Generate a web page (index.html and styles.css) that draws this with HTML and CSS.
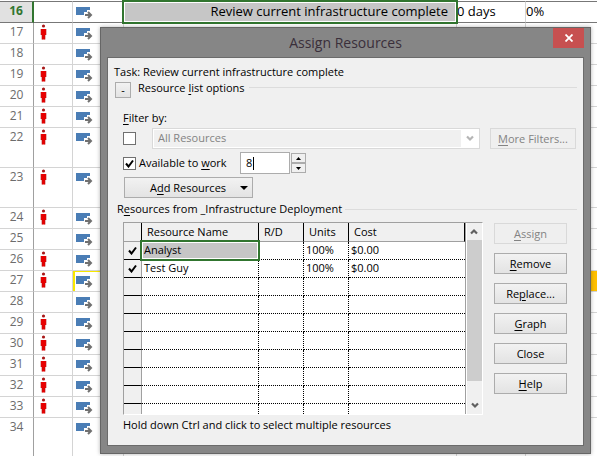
FILE: index.html
```html
<!DOCTYPE html>
<html lang="en">
<head>
<meta charset="utf-8">
<title>Assign Resources</title>
<link rel="stylesheet" href="styles.css">
</head>
<body>
<svg class="sprite" aria-hidden="true">
  <symbol id="person" viewBox="0 0 7 16">
    <circle cx="3.5" cy="2" r="1.6" fill="#a81818"/>
    <path d="M1 5h5v6H1z" fill="#f80000"/>
    <path d="M2 5h3v10.500H2z" fill="#e80000"/>
    <path d="M1 5v6M6 5v6M2 11v4.500M5 11v4.500" stroke="#b01010" stroke-width=".6"/>
  </symbol>
  <symbol id="task" viewBox="0 0 18 12">
    <path d="M0 0h14v8H0z" fill="#4a7db5"/>
    <path d="M8 5h3V3h4l3 4v5H8z" fill="#fff"/>
    <path d="M9 8h6M12 5l3 3-3 3" fill="none" stroke="#707070" stroke-width="2"/>
  </symbol>
  <symbol id="check" viewBox="0 0 9 9">
    <path d="M1 4.500l2.500 3L8 1.500" fill="none" stroke="#000" stroke-width="2"/>
  </symbol>
  <symbol id="chevron" viewBox="0 0 8 7">
    <path d="M1 1.500l3 3 3-3" fill="none" stroke="currentColor" stroke-width="2.200"/>
  </symbol>
</svg>

<table class="sheet">
  <colgroup><col class="c-num"><col class="c-ind"><col class="c-mode"><col class="c-name"><col class="c-dur"><col></colgroup>
  <tbody>
    <tr class="current"><th>16</th><td></td><td><svg class="task"><use href="#task"/></svg></td><td class="picked">Review current infrastructure complete</td><td>0 days</td><td>0%</td></tr>
    <tr><th>17</th><td><svg class="person"><use href="#person"/></svg></td><td><svg class="task"><use href="#task"/></svg></td><td></td><td></td><td></td></tr>
    <tr><th>18</th><td></td><td><svg class="task"><use href="#task"/></svg></td><td></td><td></td><td></td></tr>
    <tr><th>19</th><td><svg class="person"><use href="#person"/></svg></td><td><svg class="task"><use href="#task"/></svg></td><td></td><td></td><td></td></tr>
    <tr><th>20</th><td><svg class="person"><use href="#person"/></svg></td><td><svg class="task"><use href="#task"/></svg></td><td></td><td></td><td></td></tr>
    <tr><th>21</th><td><svg class="person"><use href="#person"/></svg></td><td><svg class="task"><use href="#task"/></svg></td><td></td><td></td><td></td></tr>
    <tr class="tall"><th>22</th><td><svg class="person"><use href="#person"/></svg></td><td><svg class="task"><use href="#task"/></svg></td><td></td><td></td><td></td></tr>
    <tr class="tall"><th>23</th><td><svg class="person"><use href="#person"/></svg></td><td><svg class="task"><use href="#task"/></svg></td><td></td><td></td><td></td></tr>
    <tr><th>24</th><td><svg class="person"><use href="#person"/></svg></td><td><svg class="task"><use href="#task"/></svg></td><td></td><td></td><td></td></tr>
    <tr><th>25</th><td></td><td><svg class="task"><use href="#task"/></svg></td><td></td><td></td><td></td></tr>
    <tr><th>26</th><td><svg class="person"><use href="#person"/></svg></td><td><svg class="task"><use href="#task"/></svg></td><td></td><td></td><td></td></tr>
    <tr><th>27</th><td><svg class="person"><use href="#person"/></svg></td><td class="ringed"><svg class="task"><use href="#task"/></svg></td><td></td><td></td><td class="amber"></td></tr>
    <tr><th>28</th><td></td><td><svg class="task"><use href="#task"/></svg></td><td></td><td></td><td></td></tr>
    <tr><th>29</th><td><svg class="person"><use href="#person"/></svg></td><td><svg class="task"><use href="#task"/></svg></td><td></td><td></td><td></td></tr>
    <tr><th>30</th><td><svg class="person"><use href="#person"/></svg></td><td><svg class="task"><use href="#task"/></svg></td><td></td><td></td><td></td></tr>
    <tr><th>31</th><td><svg class="person"><use href="#person"/></svg></td><td><svg class="task"><use href="#task"/></svg></td><td></td><td></td><td></td></tr>
    <tr><th>32</th><td><svg class="person"><use href="#person"/></svg></td><td><svg class="task"><use href="#task"/></svg></td><td></td><td></td><td></td></tr>
    <tr><th>33</th><td><svg class="person"><use href="#person"/></svg></td><td><svg class="task"><use href="#task"/></svg></td><td></td><td></td><td></td></tr>
    <tr class="tall"><th>34</th><td></td><td><svg class="task"><use href="#task"/></svg></td><td></td><td></td><td></td></tr>
  </tbody>
</table>

<section class="dialog" role="dialog" aria-labelledby="dialog-title">
  <header class="titlebar">
    <h1 id="dialog-title">Assign Resources</h1>
    <button class="close" type="button" aria-label="Close window"><svg viewBox="0 0 8 8"><path d="M.5.5l7 7M7.500.5l-7 7" stroke="#fff" stroke-width="1.800"/></svg></button>
  </header>
  <form class="panel">
    <p class="taskline">Task: Review current infrastructure complete</p>
    <div class="group options">
      <button class="btn toggle" type="button">-</button>
      <span class="legend">Resource <u>l</u>ist options</span>
      <span class="rule"></span>
    </div>
    <div class="filters">
      <label class="filter-label" for="filter-on"><u>F</u>ilter by:</label>
      <div class="row">
        <span class="tick"><input type="checkbox" id="filter-on"></span>
        <span class="combo"><select disabled aria-label="Filter"><option>All Resources</option></select><span class="drop"><svg><use href="#chevron"/></svg></span></span>
        <button class="btn more" type="button" disabled><u>M</u>ore Filters...</button>
      </div>
      <div class="row available">
        <span class="tick"><input type="checkbox" id="avail" checked><svg><use href="#check"/></svg></span>
        <label class="avail-label" for="avail">Available to <u>w</u>ork</label>
        <span class="amount"><input type="text" value="8" aria-label="Hours"><span class="caret"></span></span>
        <span class="spin">
          <button type="button" aria-label="More"><svg viewBox="0 0 5 3"><path d="M0 3L2.500 0 5 3z"/></svg></button>
          <button type="button" aria-label="Less"><svg viewBox="0 0 5 3"><path d="M0 0h5L2.500 3z"/></svg></button>
        </span>
      </div>
      <button class="btn add" type="button"><span>A<u>d</u>d Resources</span><svg viewBox="0 0 8 4"><path d="M0 0h8L4 4z"/></svg></button>
    </div>
    <div class="group source">
      <span class="legend">R<u>e</u>sources from _Infrastructure Deployment</span>
      <span class="rule"></span>
    </div>
    <div class="body">
      <div class="list">
        <div class="viewport">
          <table class="resources">
            <colgroup><col class="r-check"><col class="r-name"><col class="r-rd"><col class="r-units"><col></colgroup>
            <thead><tr><th></th><th>Resource Name</th><th>R/D</th><th>Units</th><th>Cost</th></tr></thead>
            <tbody>
              <tr><th><svg><use href="#check"/></svg></th><td class="picked">Analyst</td><td></td><td>100%</td><td>$0.00</td></tr>
              <tr><th><svg><use href="#check"/></svg></th><td>Test Guy</td><td></td><td>100%</td><td>$0.00</td></tr>
              <tr><th></th><td></td><td></td><td></td><td></td></tr>
              <tr><th></th><td></td><td></td><td></td><td></td></tr>
              <tr><th></th><td></td><td></td><td></td><td></td></tr>
              <tr><th></th><td></td><td></td><td></td><td></td></tr>
              <tr><th></th><td></td><td></td><td></td><td></td></tr>
              <tr><th></th><td></td><td></td><td></td><td></td></tr>
              <tr><th></th><td></td><td></td><td></td><td></td></tr>
              <tr><th></th><td></td><td></td><td></td><td></td></tr>
            </tbody>
          </table>
        </div>
        <div class="scrollbar">
          <span class="arrow up"><svg><use href="#chevron"/></svg></span>
          <span class="thumb"></span>
          <span class="arrow"><svg><use href="#chevron"/></svg></span>
        </div>
      </div>
      <div class="actions">
        <button class="btn" type="button" disabled><u>A</u>ssign</button>
        <button class="btn" type="button"><u>R</u>emove</button>
        <button class="btn" type="button">Re<u>p</u>lace...</button>
        <button class="btn" type="button"><u>G</u>raph</button>
        <button class="btn" type="button">Close</button>
        <button class="btn" type="button"><u>H</u>elp</button>
      </div>
    </div>
    <p class="hint">Hold down Ctrl and click to select multiple resources</p>
  </form>
</section>
</body>
</html>
```
FILE: styles.css
```css
* { box-sizing: border-box; }

body {
  position: relative;
  margin: 0;
  padding-top: 1px;
  height: 100vh;
  overflow: hidden;
  background: #fff;
  color: #000;
  font: 11px/16px "Open Sans", "Noto Sans", sans-serif;
}

button, input, select { font: inherit; color: inherit; margin: 0; padding: 0; }
p, h1 { margin: 0; font-weight: 400; }
svg { display: block; }
u { text-underline-offset: 2px; }
.sprite { position: absolute; width: 0; height: 0; }

/* Task sheet */
.sheet {
  width: 100%;
  table-layout: fixed;
  border-collapse: separate;
  border-spacing: 0;
  font-size: 13px;
  line-height: 19px;
}
.c-num { width: 34px; }
.c-ind { width: 39px; }
.c-mode { width: 51px; }
.c-name { width: 333px; }
.c-dur { width: 69px; }
.sheet tr { height: 21px; }
.sheet tr.tall { height: 40px; }
.sheet th, .sheet td {
  padding: 0;
  vertical-align: top;
  border-right: 1px solid #d4d4d4;
  border-bottom: 1px solid #d4d4d4;
}
.sheet th {
  border-right-color: #a0a0a0;
  color: #6c6c6c;
  font-weight: 400;
  font-size: 12px;
  line-height: 18px;
}
.sheet td:last-child { border-right: 0; }
.sheet .current { height: 22px; }
.sheet .current th, .sheet .current td {
  border-top: 1px solid #777;
  border-bottom-color: #777;
}
.sheet .current th {
  background: #e1e1e1;
  border-right: 2px solid #31752f;
  color: #31752f;
  font-weight: 700;
}
.sheet .current .picked { padding-right: 8px; text-align: right; }
.picked { position: relative; background: #c6c6c6; }
.picked::after {
  content: "";
  position: absolute;
  inset: -2px;
  border: 2px solid #31752f;
  box-shadow: inset 0 0 0 1px #fff;
}
.person { width: 7px; height: 16px; margin: 1px 0 0 6px; }
.task { width: 18px; height: 12px; margin: 5px 0 0 3px; }
.ringed { box-shadow: inset 2px 1px #f8e800; }
.amber { background: #ffc000; }

/* Dialog window */
.dialog {
  position: absolute;
  top: 27px;
  left: 100px;
  right: 6px;
  padding: 0 6px 7px;
  border: 1px solid #666;
  background: #868686;
  box-shadow: 0 0 4px rgba(0, 0, 0, .3);
}
.titlebar {
  display: grid;
  grid-template-columns: 1fr auto 1fr;
  align-items: start;
  height: 29px;
}
.titlebar h1 {
  grid-column: 2;
  color: #3a2f3a;
  font-size: 14px;
  line-height: 30px;
}
.close {
  justify-self: end;
  display: grid;
  place-items: center;
  width: 31px;
  height: 20px;
  border: 0;
  background: #c75050;
}
.close svg { width: 8px; height: 8px; }
.panel {
  padding: 6px 6px 12px;
  border: 1px solid #6b6b6b;
  background: #f0f0f0;
}

.group { display: flex; }
.rule { flex: 1; border-top: 1px solid #dcdcdc; }
.btn {
  height: 21px;
  border: 1px solid #acacac;
  background: linear-gradient(#f2f2f2, #e3e3e3);
}
.btn:disabled { border-color: #d9d9d9; background: #efefef; color: #838383; }
.options { align-items: flex-start; padding-top: 2px; }
.toggle { width: 16px; height: 16px; line-height: 12px; margin-left: 1px; }
.options .legend { margin: -2px 4px 0 7px; }
.options .rule { margin-top: 5px; }

.filters { padding: 12px 1px 0 9px; }
.filter-label { display: block; }
.row { display: flex; align-items: center; height: 21px; margin-top: 2px; }
.tick { display: grid; width: 13px; height: 13px; }
.tick > * { grid-area: 1 / 1; }
.tick input { appearance: none; width: 13px; height: 13px; border: 1px solid #707070; background: #fff; }
.tick svg { width: 9px; height: 9px; margin: 2px; pointer-events: none; }
.combo {
  display: flex;
  flex: 1;
  height: 21px;
  margin: 0 10px 0 16px;
  padding: 1px;
  border: 1px solid #d9d9d9;
  background: #fff;
}
.combo select {
  appearance: none;
  flex: 1;
  padding: 0 0 2px 4px;
  border: 0;
  background: #f0f0f0;
  color: #838383;
  opacity: 1;
}
.drop { display: grid; place-items: center; width: 17px; color: #b5b5b5; }
.drop svg, .arrow svg { width: 8px; height: 7px; }
.more { width: 86px; }
.available { height: 22px; margin-top: 3px; }
.avail-label { width: 101px; padding-left: 3px; }
.amount {
  display: flex;
  align-items: center;
  width: 50px;
  height: 22px;
  margin-left: 3px;
  padding-left: 5px;
  border: 1px solid #acacac;
  background: #fff;
}
.amount input { width: 7px; border: 0; background: none; outline: 0; }
.caret { width: 1px; height: 13px; background: #000; }
.spin { display: flex; flex-direction: column; margin-left: 1px; }
.spin button {
  display: grid;
  place-items: center;
  width: 15px;
  height: 10px;
  border: 1px solid #acacac;
  background: #f0f0f0;
}
.spin svg { width: 5px; height: 3px; }
.add {
  display: flex;
  align-items: center;
  justify-content: space-between;
  width: 129px;
  margin: 3px 0 0 1px;
  padding: 0 4px 0 25px;
}
.add svg { width: 8px; height: 4px; }

.source { align-items: center; padding: 3px 0 0 3px; }
.source .rule { margin-left: 3px; }

.body { display: flex; padding: 5px 10px 0 9px; }
.list {
  display: flex;
  flex: 1;
  height: 193px;
  border: 1px solid;
  border-color: #a0a0a0 #fff #fff #a0a0a0;
}
.viewport { flex: 1; overflow: hidden; border-right: 1px solid #a0a0a0; background: #fff; }
.resources {
  width: 100%;
  table-layout: fixed;
  border-collapse: separate;
  border-spacing: 0;
}
.r-check { width: 18px; }
.r-name { width: 117px; }
.r-rd, .r-units { width: 45px; }
.resources tr { height: 18px; }
.resources thead tr { height: 19px; }
.resources th, .resources td { padding: 0; line-height: 16px; text-align: left; font-weight: 400; }
.resources thead th {
  height: 19px;
  padding-left: 5px;
  background: #f0f0f0;
  border-right: 1px solid #000;
  border-bottom: 1px solid #a0a0a0;
  line-height: 18px;
}
.resources tbody th {
  background: #f0f0f0;
  border-right: 1px solid #a0a0a0;
  border-bottom: 1px solid #000;
}
.resources tbody th svg { width: 9px; height: 9px; margin-left: 4px; }
.resources tbody td {
  padding-left: 2px;
  border-right: 1px dotted #000;
  border-bottom: 1px dotted #000;
  vertical-align: top;
}
.resources tbody td:last-child { border-right: 0; }
.scrollbar { display: flex; flex-direction: column; width: 16px; border-left: 1px solid #fff; }
.arrow { display: grid; place-items: center; height: 17px; color: #606060; }
.up { transform: rotate(180deg); }
.thumb { flex: 1; margin-bottom: 16px; background: #cdcdcd; }
.actions { display: grid; align-content: start; gap: 9px; width: 73px; margin: 1px 0 0 11px; }

.hint { padding: 2px 0 0 9px; }
```
